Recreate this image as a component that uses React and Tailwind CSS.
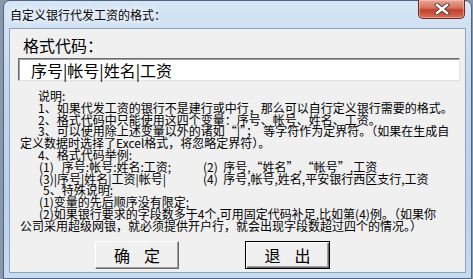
const cjk = { fontFamily: '"Noto Sans CJK SC", "Noto Sans", sans-serif' };

function CloseButton() {
  return (
    <div className="w-[47px] h-[19px] -mt-px rounded-b-[5px] border border-t-0 border-[#6a2a22] bg-[linear-gradient(#e9a597,#d3705d_45%,#c2412b_55%,#d86e55)] flex items-center justify-center shadow-[inset_0_0_0_1px_rgba(255,210,200,0.5)]">
      <svg width="16" height="12" viewBox="0 0 16 12">
        <path d="M3 2 L13 10 M13 2 L3 10" stroke="#4a3a3a" strokeWidth="4.2" strokeLinecap="square" />
        <path d="M3 2 L13 10 M13 2 L3 10" stroke="#ffffff" strokeWidth="2.4" strokeLinecap="square" />
      </svg>
    </div>
  );
}

function Line({ pl, children }) {
  return (
    <div className={`whitespace-pre ${pl}`}>{children}</div>
  );
}

export default function App() {
  return (
    <div className="w-[473px] h-[279px] bg-[#8a97a8] pl-[3px] pr-px overflow-hidden" style={cjk}>
      <div className="h-full rounded-t-[7px] border border-[#4f6482] bg-[linear-gradient(#d7e6f6,#c3d7ee_30%,#bcd2eb_70%,#c6daf0)] px-[5px] pb-[5px] flex flex-col">
        {/* title bar */}
        <div className="h-[27px] flex shrink-0">
          <div className="flex-1 pl-px pt-[6px] text-[12px] leading-[16px] text-black [text-shadow:0_0_6px_#fff,0_0_10px_#fff]">
            自定义银行代发工资的格式：
          </div>
          <div className="mr-px">
            <CloseButton />
          </div>
        </div>

        {/* client area */}
        <div className="flex-1 border border-[#8fa3bd] bg-[#f0f0f0] flex flex-col text-black">
          <div className="mt-[8px] ml-[13px] text-[16px] leading-[16px]">格式代码：</div>
          <div className="mt-[5px] ml-[8px] mr-[5px] h-[23px] bg-white border border-t-[#6d6d6d] border-l-[#6d6d6d] border-r-[#e3e3e3] border-b-[#e3e3e3] shadow-[inset_1px_1px_0_#a0a0a0] flex items-center pl-[12px] text-[16px] leading-[16px]">
            序号|帐号|姓名|工资
          </div>

          <div className="mt-[9px] pl-[10px] text-[12px] leading-[11.8px]">
            <Line pl="pl-[18px]">说明:</Line>
            <Line pl="pl-[18px]">1、如果代发工资的银行不是建行或中行，那么可以自行定义银行需要的格式。</Line>
            <Line pl="pl-[18px]">2、格式代码中只能使用这四个变量：序号、帐号、姓名、工资。</Line>
            <Line pl="pl-[18px]">3、可以使用除上述变量以外的诸如“|”；  等字符作为定界符。（如果在生成自</Line>
            <Line pl="pl-0">定义数据时选择了Excel格式，将忽略定界符）。</Line>
            <Line pl="pl-[18px]">4、格式代码举例:</Line>
            <div className="flex pl-[19px]">
              <span className="w-[164px] whitespace-pre">(1)   序号:帐号:姓名:工资;</span>
              <span className="whitespace-pre">(2)  序号,“姓名”,“帐号”,工资</span>
            </div>
            <div className="flex pl-[19px]">
              <span className="w-[164px] whitespace-pre">(3)|序号|姓名|工资|帐号|</span>
              <span className="whitespace-pre">(4)  序号,帐号,姓名,平安银行西区支行,工资</span>
            </div>
            <Line pl="pl-[23px]">5、特殊说明:</Line>
            <Line pl="pl-[19px]">(1)变量的先后顺序没有限定;</Line>
            <Line pl="pl-[19px]">(2)如果银行要求的字段数多于4个,可用固定代码补足,比如第(4)例。（如果你</Line>
            <Line pl="pl-0">公司采用超级网银，就必须提供开户行，就会出现字段数超过四个的情况。）</Line>
          </div>

          <div className="mt-[9px] flex pl-[85px] gap-[66px]">
            <button className="w-[84px] h-[28px] bg-[#f0f0f0] border border-t-white border-l-white border-r-[#696969] border-b-[#696969] shadow-[inset_-1px_-1px_0_#a0a0a0] flex items-center justify-center gap-[14px] text-[16px] leading-[16px] text-black">
              <span>确</span>
              <span>定</span>
            </button>
            <button className="w-[85px] h-[28px] bg-[#f0f0f0] border border-black shadow-[inset_1px_1px_0_#fff,inset_-1px_-1px_0_#696969,inset_-2px_-2px_0_#a0a0a0] flex items-center justify-center gap-[14px] text-[16px] leading-[16px] text-black">
              <span>退</span>
              <span>出</span>
            </button>
          </div>
        </div>
      </div>
    </div>
  );
}
